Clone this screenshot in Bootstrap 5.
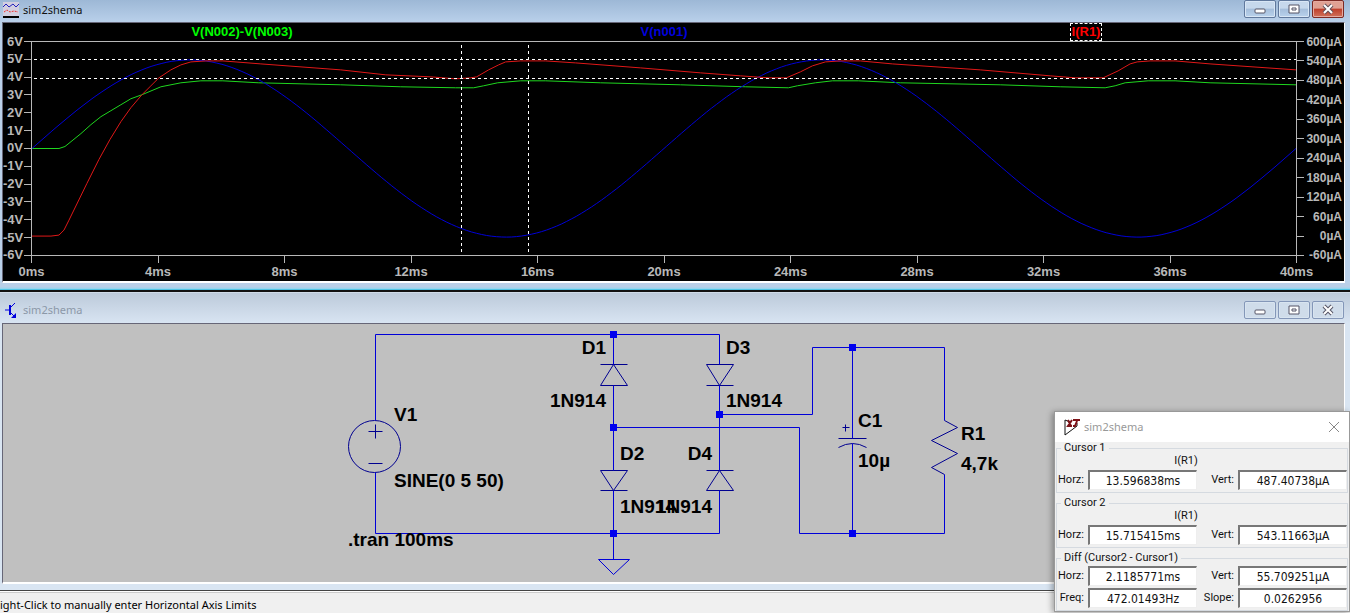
<!DOCTYPE html>
<html lang="en">
<head>
<meta charset="utf-8">
<meta name="viewport" content="width=device-width, initial-scale=1">
<title>sim2shema</title>
<link href="https://cdn.jsdelivr.net/npm/bootstrap@5.3.0/dist/css/bootstrap.min.css" rel="stylesheet">
<style>
body{font:11px/16px "Noto Sans","Open Sans",sans-serif;color:#111;background:#f0f0f0;min-height:100vh}
.win-plot{background:#bad1ea}
.win-plot .titlebar{height:22px;padding:0 6px 3px 3px;background:linear-gradient(#9db8d6,#b9d0ea)}
.win-sch{background:#d9e5f2}
.win-sch .titlebar{height:30px;padding:6px 6px 2px 3px;background:linear-gradient(#bccada,#d8e4f2);color:#8c98a8}
.cap-group{gap:2px}
.capbtn{width:32px;height:18px;padding:0;border:1px solid #60789c;border-radius:2px;background:linear-gradient(#c6d8ec 45%,#a5bedb 50%,#b9d2ec);box-shadow:inset 0 0 0 1px #d8e6f5}
.capbtn.close-on{border-color:#7c2a24;background:linear-gradient(#e0a193 45%,#bf3f2b 50%,#d0725c);box-shadow:inset 0 0 0 1px #e5aaa0}
.win-sch .capbtn{border-color:#8497b8;background:#cfdcea;box-shadow:inset 0 0 0 1px #d8e4f0}
.capbtn svg{display:block;margin:auto}
/* waveform pane */
.pane{margin:0 5px 0 2px;border-top:1px solid #667;border-left:1px solid #667;border-right:1px solid #fff;border-bottom:2px solid #fff}
.plot{background:#000;color:#b8b8b8;font:bold 13px/14px "Liberation Sans",Arial,sans-serif;display:grid;grid-template-columns:28px minmax(0,1fr) 47px;grid-template-rows:18px 215px 25px}
.traces{grid-column:2}
.traces button{font:inherit;background:none;border:1px dashed transparent;padding:1px;line-height:14px;height:18px}
.t-green{color:#0f0}.t-blue{color:#00d}.t-red{color:#f00}
.traces .picked{border-color:#fff}
.axis{list-style:none;margin:0;padding:0;display:flex;justify-content:space-between}
.axis-y{flex-direction:column;grid-row:2}
.axis-y li{height:1px;display:flex;align-items:center;gap:1px}
.axis-left li{justify-content:flex-end}
.axis-left li::after,.axis-right li::before{content:"";width:7px;height:1px;background:#b8b8b8}
.axis-right{padding-right:2px;font-size:12px}
.axis-right li{justify-content:space-between}
.axis-x{grid-column:2}
.axis-x li{width:1px;display:flex;flex-direction:column;align-items:center;white-space:nowrap;gap:2px}
.axis-x li::before{content:"";width:1px;height:7px;background:#b8b8b8;flex:none}
.graph{grid-column:2;grid-row:2;width:100%;height:100%;display:block;border:1px solid #b8b8b8}
.graph *{fill:none;vector-effect:non-scaling-stroke}
.seam-a{height:7px;border-bottom:1px solid #4fc4e4;background:linear-gradient(#b9cfe8 65%,#8ed6f0)}
.seam-b{height:3px;background:#111;border-bottom:1px solid #cfdbe8}
/* schematic */
.sheet{background:#c0c0c0;height:261px}
.sheet text{font:bold 19px "Liberation Sans",Arial,sans-serif;fill:#000}
.wire{fill:none;stroke:#0000d8}.sym{fill:none;stroke:#000090}.node{fill:#0000ee}
.seam-c{height:7px;border-bottom:1px solid #444}
.status{height:22px;border-top:1px solid #fff;box-shadow:inset 0 1px #ccc;padding-top:5px;color:#000}
/* cursor read-out */
.readout{position:absolute;right:0;bottom:1px;width:296px;border:1px solid #999;background:#f0f0f0;box-shadow:-2px 1px 6px #0005;font:11px/12px Roboto,Arial,sans-serif;color:#111}
.readout .head{height:30px;background:#fff;padding:0 9px;color:#999;font:11px/16px "Noto Sans","Open Sans",sans-serif}
.readout .head button{border:0;background:none;padding:0;line-height:0}
.readout fieldset{border:1px solid #d5dae0;margin:0 1px;padding:0 0 2px}
.readout fieldset + fieldset{margin-top:4px}
.readout legend{float:none;font:inherit;width:auto;margin:0 0 0 4px;padding:0 3px;line-height:12px}
.tracename{text-align:center;line-height:14px;padding-right:32px}
.fields{display:grid;grid-template-columns:27px minmax(0,1fr) 33px minmax(0,1fr);column-gap:4px;row-gap:2px;align-items:center;margin-top:2px}
.fields label{text-align:right;white-space:nowrap}
.fields input{width:100%;min-width:0;height:20px;border:1px solid;border-color:#777 #eee #eee #777;border-width:2px 1px 1px 2px;background:#fff;padding:0;text-align:center;font:12px/16px "DejaVu Sans Condensed","DejaVu Sans",sans-serif;color:#111}
</style>
</head>
<body>
<div class="position-relative d-flex flex-column overflow-hidden">
<section class="win-plot">
  <header class="titlebar d-flex align-items-center">
    <svg width="16" height="16" viewBox="0 0 16 16" fill="none" class="me-1"><rect width="16" height="15" fill="#d2cfe0"/><path d="M0 5l3-3 3 3 4-3 3 3 3-3" stroke="#22b"/><path d="M1 10l3-2 3 2 4-1 4 1" stroke="#e33" stroke-dasharray="2 1"/><path d="M0 15h16" stroke="#000" stroke-width="2"/></svg>
    <span>sim2shema</span>
    <div class="ms-auto d-flex align-self-start cap-group">
      <button class="capbtn" aria-label="Minimize"><svg width="12" height="12"><rect x="1" y="6" width="10" height="4" rx="1" fill="#fff" stroke="#556"/></svg></button>
      <button class="capbtn" aria-label="Restore"><svg width="12" height="12"><path d="M1 2h10v8H1zM4 5h4v2H4z" fill="#fff" stroke="#556"/></svg></button>
      <button class="capbtn close-on" aria-label="Close"><svg width="12" height="12"><path d="M2 2l8 8M10 2l-8 8" stroke="#645058" stroke-width="4"/><path d="M2 2l8 8M10 2l-8 8" stroke="#fff" stroke-width="2"/></svg></button>
    </div>
  </header>
  <div class="pane plot">
    <div class="traces row g-0 text-center">
      <div class="col"><button class="t-green">V(N002)-V(N003)</button></div>
      <div class="col"><button class="t-blue">V(n001)</button></div>
      <div class="col"><button class="t-red picked">I(R1)</button></div>
    </div>
    <ul class="axis axis-y axis-left"><li>6V</li><li>5V</li><li>4V</li><li>3V</li><li>2V</li><li>1V</li><li>0V</li><li>-1V</li><li>-2V</li><li>-3V</li><li>-4V</li><li>-5V</li><li>-6V</li></ul>
    <svg class="graph" viewBox="31 41 1265 214" preserveAspectRatio="none" role="img" aria-label="Waveforms">
      <path stroke="#1fd61f" d="M31 148H58L64 146 80 133 90 124 100 116 110 110 120 104 130 98 141 94 160 86 180 82 200 80H222L258 82 340 84 400 86 455 87H473L483 85 497 82 520 80H545L600 82 680 84 745 86 788 87 797 85 815 82 832 80H858L900 82 1000 84 1060 86 1105 87 1115 85 1125 82 1148 80H1175L1210 82 1296 84"/>
      <path id="sine" stroke="#0000d8"/>
      <path stroke="#e01818" d="M31 236H50L58 235 63 230 68 220 86 183 98 159 109 139 120 121 130 107 141 94 150 85 158 77 170 69 180 64 190 61 205 60H222L260 63 340 69 385 74 430 76 455 78 470 77 476 76 488 69 498 64 505 61 520 60H545L575 62 640 67 700 72 740 75 768 77 786 77 800 71 812 65 825 61 840 60H860L892 63 980 69 1050 75 1075 77 1103 77 1118 70 1130 63 1137 61 1150 60H1175L1210 63 1296 69"/>
      <path stroke="#fff" stroke-dasharray="3 3" shape-rendering="crispEdges" d="M33 59H1296M33 78H1296M461 44V255M528 44V255"/>
    </svg>
    <ul class="axis axis-y axis-right"><li>600µA</li><li>540µA</li><li>480µA</li><li>420µA</li><li>360µA</li><li>300µA</li><li>240µA</li><li>180µA</li><li>120µA</li><li>60µA</li><li>0µA</li><li>-60µA</li></ul>
    <ul class="axis axis-x"><li>0ms</li><li>4ms</li><li>8ms</li><li>12ms</li><li>16ms</li><li>20ms</li><li>24ms</li><li>28ms</li><li>32ms</li><li>36ms</li><li>40ms</li></ul>
  </div>
  <div class="seam-a"></div><div class="seam-b"></div>
</section>

<section class="win-sch">
  <header class="titlebar d-flex align-items-center">
    <svg width="16" height="18" viewBox="0 0 16 18" fill="none" stroke="#00d" class="me-1"><path d="M2 9h4M12 2L7 7M7 11l4 4"/><path d="M7 4v10" stroke-width="2"/><path d="M13 17v-5l-5 5z" fill="#00d" stroke="none"/></svg>
    <span>sim2shema</span>
    <div class="ms-auto d-flex cap-group">
      <button class="capbtn" aria-label="Minimize"><svg width="12" height="12"><rect x="1" y="6" width="10" height="4" rx="1" fill="#fff" stroke="#556"/></svg></button>
      <button class="capbtn" aria-label="Restore"><svg width="12" height="12"><path d="M1 2h10v8H1zM4 5h4v2H4z" fill="#fff" stroke="#556"/></svg></button>
      <button class="capbtn" aria-label="Close"><svg width="12" height="12"><path d="M2 2l8 8M10 2l-8 8" stroke="#556" stroke-width="4"/><path d="M2 2l8 8M10 2l-8 8" stroke="#fff" stroke-width="2"/></svg></button>
    </div>
  </header>
  <div class="pane sheet overflow-hidden">
    <svg class="d-block" width="1020" height="257" viewBox="3 324 1020 257" role="img" aria-label="Bridge rectifier schematic">
      <g transform="translate(.5 .5)">
      <g class="sym">
        <circle cx="374" cy="446" r="26"/>
        <path d="M368 431H382M375 424V438M368 463H382M838 438H866M842 427H849M845 424V431M600 364H627M706 385H733M600 490H627M706 470H733"/>
        <path d="M600 385H627L613 364ZM706 364H733L719 385ZM600 470H627L613 490ZM706 490H733L719 470ZM838 447Q852 439 866 447M944 420L957 427 931 440 957 453 931 467 944 474"/>
      </g>
      <path class="wire" d="M375 420V334H719V364M613 334V364M613 385V470M613 490V559M375 472V533H719V490M719 385V470M719 414H812V347H944V420M613 427H799V533H944V474M852 347V438M852 443V533M598 559H629L613 574Z"/>
      </g>
      <path class="node" d="M610 331h7v7h-7zM610 424h7v7h-7zM610 530h7v7h-7zM716 411h7v7h-7zM849 344h7v7h-7zM849 530h7v7h-7z"/>
      <text x="394" y="421">V1</text><text x="394" y="487">SINE(0 5 50)</text><text x="348" y="546">.tran 100ms</text>
      <text x="606" y="354" text-anchor="end">D1</text><text x="606" y="407" text-anchor="end">1N914</text>
      <text x="726" y="354">D3</text><text x="726" y="407">1N914</text>
      <text x="620" y="460">D2</text><text x="620" y="513">1N914</text>
      <text x="712" y="460" text-anchor="end">D4</text><text x="712" y="513" text-anchor="end">1N914</text>
      <text x="858" y="427">C1</text><text x="858" y="467">10µ</text>
      <text x="961" y="440">R1</text><text x="961" y="470">4,7k</text>
    </svg>
  </div>
  <div class="seam-c"></div>
</section>
<footer class="status">ight-Click to manually enter Horizontal Axis Limits</footer>

<form class="readout">
  <div class="head d-flex align-items-center">
    <svg width="16" height="17" viewBox="0 0 16 17" class="me-1" fill="none"><path d="M1 1v15L13 7V4" stroke="#111"/><path d="M1 1l5 2" stroke="#111"/><path d="M4 1l3 6M8 1L4 7h4M9 1h7M13 2l-2 5H9" stroke="#7c1218" stroke-width="2"/></svg>
    <span>sim2shema</span>
    <button type="button" class="ms-auto" aria-label="Close"><svg width="12" height="12" stroke="#888"><path d="M1 1l10 10M11 1L1 11"/></svg></button>
  </div>
  <fieldset>
    <legend>Cursor 1</legend><div class="tracename">I(R1)</div>
    <div class="fields"><label for="h1">Horz:</label><input id="h1" value="13.596838ms"><label for="v1">Vert:</label><input id="v1" value="487.40738µA"></div>
  </fieldset>
  <fieldset>
    <legend>Cursor 2</legend><div class="tracename">I(R1)</div>
    <div class="fields"><label for="h2">Horz:</label><input id="h2" value="15.715415ms"><label for="v2">Vert:</label><input id="v2" value="543.11663µA"></div>
  </fieldset>
  <fieldset>
    <legend>Diff (Cursor2 - Cursor1)</legend>
    <div class="fields"><label for="h3">Horz:</label><input id="h3" value="2.1185771ms"><label for="v3">Vert:</label><input id="v3" value="55.709251µA"><label for="fq">Freq:</label><input id="fq" value="472.01493Hz"><label for="sl">Slope:</label><input id="sl" value="0.0262956"></div>
  </fieldset>
</form>
</div>
<script src="https://cdn.jsdelivr.net/npm/bootstrap@5.3.0/dist/js/bootstrap.bundle.min.js"></script>
<script>
// 5 V, 50 Hz source over 40 ms
const pts = [];
for (let x = 0; x <= 1265; x += 5) pts.push((31 + x) + ' ' + (148 - 89 * Math.sin(4 * Math.PI * x / 1265)).toFixed(1));
document.getElementById('sine').setAttribute('d', 'M' + pts.join('L'));
</script>
</body>
</html>
